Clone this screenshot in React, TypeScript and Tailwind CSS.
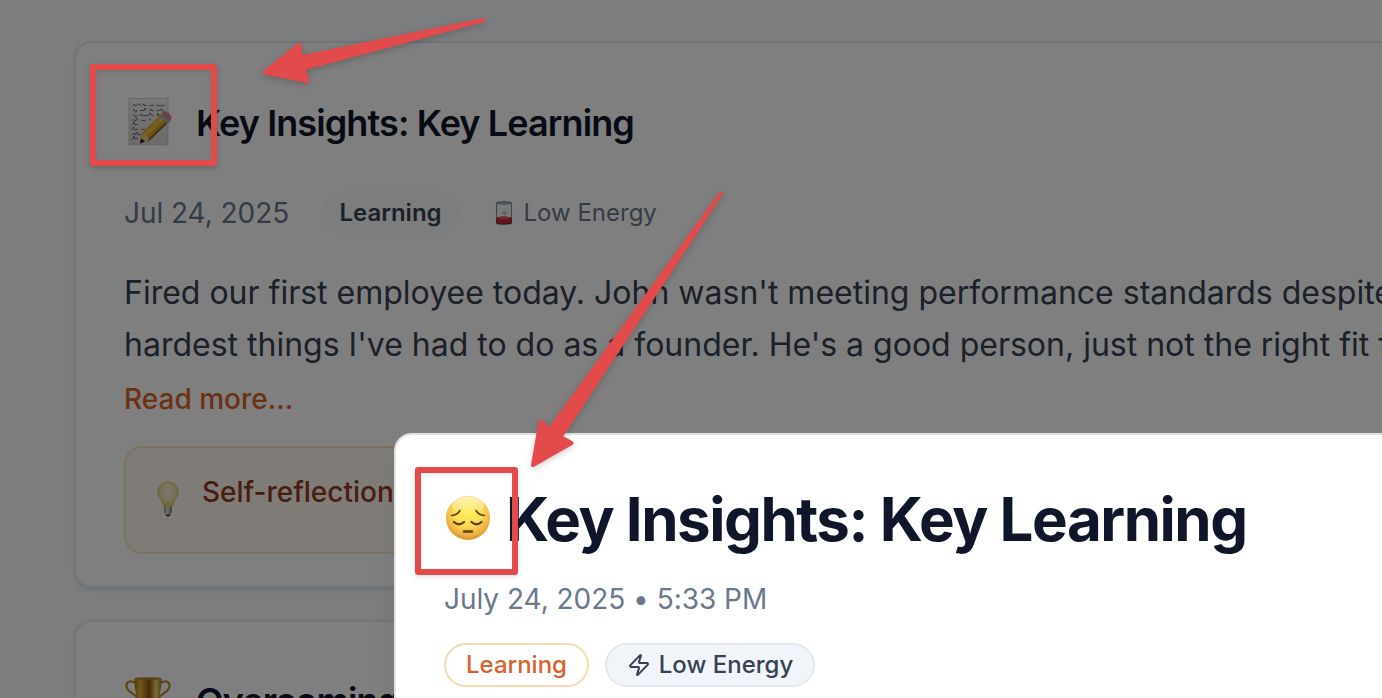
import React from 'react';
import { Zap } from 'lucide-react';

function MemoIcon() {
  return (
    <svg className="h-12 w-12 shrink-0" viewBox="0 0 48 48">
      <defs>
        <linearGradient id="pencil" x1="0" y1="0" x2="1" y2="1">
          <stop offset="0" stopColor="#f0c53c" />
          <stop offset="0.55" stopColor="#dda62d" />
          <stop offset="1" stopColor="#a8741c" />
        </linearGradient>
        <linearGradient id="paper" x1="0" y1="0" x2="0" y2="1">
          <stop offset="0" stopColor="#f0f0f0" />
          <stop offset="1" stopColor="#d6d6d6" />
        </linearGradient>
      </defs>
      <rect x="4" y="0.500" width="39" height="46.500" fill="url(#paper)" stroke="#c2c2c2" strokeWidth=".8" />
      <g fill="none" stroke="#333" strokeWidth=".65" strokeLinejoin="round">
        <path d="M8 8q1-3 2-1t2 0 2-1 2 1M17 8l2-2 1 2 2-1M24 8l2-1 1 1 2-1M31 8l2-1 2 1 2-1 1 1 2-1" />
        <path d="M8 13q1-3 2 0t2-1M15 13l1-1 1 1 1-1 1 1 1-3 1 2M24 13l2-2 1 2 2-1M31 13l2-1 1 1 2-2 1 2 2-1" />
        <path d="M8 18q1-3 2 0t2-1M14 18l2-2 1 2 2-1 1 1 2-1 1 1 2-3 2 3 2-1M32 18l1-3 1 3 2-1" />
        <path d="M7 22.500q1-2 2 0t2-1 2 1M16 23l2-1 1 1 2-1M24 22l2-1" />
        <path d="M7 27l2-3 1 3 2-1 1 1M7 32l1-3 2 3 2-1 1 1M16 32l2-1 2 1" />
        <path d="M7 37l2-2 1 2 2-3 1 3 3-1M7 42l2-4 1 3 2-1 1 1" />
      </g>
      <path d="m15 42 2-7L36.500 15.500l8 7.500L23.500 43.500z" fill="url(#pencil)" />
      <path d="M18.500 36 37 17.500l3 3-18 18z" fill="#f3d24f" opacity=".55" />
      <path d="m22.500 42 20.500-20 1.500 1.500-21 20z" fill="#95631a" />
      <path d="m15 45.500 2-9.500c3 0 6.500 3 7 6.500z" fill="#e0c59a" />
      <path d="m15 45.500 1-5 4 3z" fill="#161616" />
      <path d="m34 18 4-4 8 8-4 4z" fill="#a4b0ba" />
      <path d="m36.500 15.500 2-2c3-1 9 4 8 7l-1.500 3z" fill="#db8186" />
    </svg>
  );
}

function BatteryIcon() {
  return (
    <svg className="h-6 w-[18px] shrink-0" viewBox="0 0 18 24">
      <rect x="1.500" y="1.500" width="15" height="21.500" rx="2" fill="#f1f1f1" stroke="#888" strokeWidth="1.100" />
      <path d="M1 17c3-2 13-2 16 0v4.500c-2 2-14 2-16 0z" fill="#b92b34" />
      <ellipse cx="9" cy="17" rx="6" ry="1.500" fill="#d95258" />
      <path d="M1 21c4 2 12 2 16 0v1c-3 2-13 2-16 0z" fill="#7b2730" />
      <path d="m10.500 8-4 5h3l-1 3.500 4-5.500h-3z" fill="#bbb" />
      <ellipse cx="9" cy="1.800" rx="7.500" ry="1.200" fill="#a6b6c2" stroke="#607486" strokeWidth=".7" />
    </svg>
  );
}

function BulbIcon() {
  return (
    <svg className="h-9 w-[22px] shrink-0" viewBox="0 0 22 36">
      <defs>
        <radialGradient id="bulb" cx=".5" cy=".38" r=".6">
          <stop offset="0" stopColor="#f7f4e4" />
          <stop offset="0.6" stopColor="#eee2ae" />
          <stop offset="1" stopColor="#dfc665" />
        </radialGradient>
        <linearGradient id="bulbBase">
          <stop offset="0" stopColor="#888" />
          <stop offset=".4" stopColor="#e4e4e4" />
          <stop offset="1" stopColor="#777" />
        </linearGradient>
      </defs>
      <path d="M11 1C5 1 1 5 1 11c0 6 5 9 6 15h8c1-6 6-9 6-15C21 5 17 1 11 1z" fill="url(#bulb)" stroke="#d9c46c" />
      <path d="M7 26h8v5l-2 3H9l-2-3z" fill="url(#bulbBase)" />
      <path d="M8.500 33.500h5l-1.500 2h-2z" fill="#333" />
    </svg>
  );
}

function TrophyIcon() {
  return (
    <svg className="h-12 w-12 shrink-0" viewBox="0 0 48 48">
      <defs>
        <linearGradient id="cup">
          <stop offset="0" stopColor="#a96d13" />
          <stop offset=".2" stopColor="#e0b442" />
          <stop offset=".4" stopColor="#b87a18" />
          <stop offset=".55" stopColor="#8c540a" />
          <stop offset=".8" stopColor="#f0da78" />
          <stop offset="1" stopColor="#a56d1d" />
        </linearGradient>
      </defs>
      <path d="M12 6C5 2 1 6 3 11c2 6 9 5 11 11M36 6c7-4 11 0 9 5-2 6-9 5-11 11" fill="none" stroke="#c48c2b" strokeWidth="2.300" />
      <path d="M10.500 1.500h27c0 16-4 24-10.500 27.500v8h-6v-8C14.500 25.500 10.500 17.500 10.500 1.500z" fill="url(#cup)" />
      <ellipse cx="24" cy="1.500" rx="13.500" ry="1.300" fill="#b5822f" />
      <path d="M14 37h20v10H14z" fill="#6b3e18" />
    </svg>
  );
}

function PensiveIcon() {
  return (
    <svg className="h-[46px] w-[46px] shrink-0" viewBox="0 0 46 46">
      <defs>
        <radialGradient id="face" cx=".5" cy=".36" r=".65">
          <stop offset="0" stopColor="#fdf05a" />
          <stop offset=".5" stopColor="#f9dc55" />
          <stop offset=".8" stopColor="#eeb242" />
          <stop offset="1" stopColor="#d98c31" />
        </radialGradient>
        <linearGradient id="shine" x1="0" y1="0" x2="0" y2="1">
          <stop offset="0" stopColor="#fff" stopOpacity=".6" />
          <stop offset="1" stopColor="#fff" stopOpacity="0" />
        </linearGradient>
      </defs>
      <circle cx="23" cy="23" r="22" fill="url(#face)" />
      <ellipse cx="23" cy="10.500" rx="16" ry="9" fill="url(#shine)" />
      <g fill="none" stroke="#64400f" strokeLinecap="round">
        <path d="M6.500 20.500q6-.500 8.500-5M39.500 20.500q-6-.500-8.500-5" strokeWidth="1.600" />
        <path d="M9 27q5 4.500 10 0M26.500 27q5 4.500 10 0" strokeWidth="2.300" />
        <path d="M19 36.500h8" strokeWidth="2.500" />
      </g>
    </svg>
  );
}

function EntryCard() {
  return (
    <article className="h-[547px] shrink-0 rounded-[18px] border-2 border-[#e2e8f0] bg-white px-12 pt-10 shadow-[0_2px_4px_rgba(0,0,0,0.1)]">
      <div className="flex h-20 items-center">
        <div className="-mt-[3px] ml-px"><MemoIcon /></div>
        <h2 className="ml-[23px] text-[36px] font-semibold tracking-[-0.9px] text-[#10162a]">Key Insights: Key Learning</h2>
      </div>
      <div className="mt-7 flex h-11 items-center">
        <span className="w-[197px] text-[28px] tracking-[-0.05px] text-[#6b778c]">Jul 24, 2025</span>
        <span className="flex h-11 w-[139px] items-center justify-center rounded-full bg-slate-50 text-[24px] font-semibold text-[#364153]">Learning</span>
        <span className="ml-[35px] flex items-center gap-[10.5px] text-[24px] text-[#6b778c]">
          <BatteryIcon />
          Low Energy
        </span>
      </div>
      <p className="mt-8 text-[32px] leading-[52px] text-[#364153]">
        Fired our first employee today. John wasn't meeting performance standards despite
        <br />
        hardest things I've had to do as a founder. He's a good person, just not the right fit for
      </p>
      <button className="mt-2 block h-10 text-[28px] leading-10 font-medium text-[#d9622b]">Read more...</button>
      <div className="mt-[27px] flex h-[108px] rounded-[18px] border-2 border-[#f8e4c8] bg-[#fff7ec] pt-6 pl-[31px]">
        <div className="pt-[9px]"><BulbIcon /></div>
        <p className="ml-[23px] text-[28px] leading-10 font-medium text-[#913b1f]">Self-reflection</p>
      </div>
    </article>
  );
}

function Arrows() {
  return (
    <svg className="absolute inset-0 h-[698px] w-[1382px] drop-shadow-[0_2px_3px_rgba(0,0,0,0.2)]" viewBox="0 0 1382 698">
      <g fill="#e34a4b" stroke="#e34a4b" strokeWidth="4" strokeLinejoin="round">
        <path d="m483.500 20-183 37.500-1-13-35 28 43 8.500-4.500-12.500z" />
        <path d="m721 193.500-171 236-9.500-8-7.500 43.500 38.500-22-11-6z" />
      </g>
    </svg>
  );
}

export default function App() {
  return (
    <main className="relative h-[698px] w-[1382px] overflow-hidden bg-[#f8fafc] font-[Inter,sans-serif] whitespace-nowrap [font-optical-sizing:none]">
      <div className="flex h-[698px] w-[2000px] flex-col gap-8 overflow-hidden pt-[41px] pl-[74px]">
        <EntryCard />
        <article className="h-[547px] shrink-0 rounded-[18px] border-2 border-[#e2e8f0] bg-white px-12 pt-[39px] shadow-[0_2px_4px_rgba(0,0,0,0.1)]">
          <div className="flex h-20 items-center">
            <TrophyIcon />
            <h2 className="ml-6 text-[36px] font-semibold tracking-[-0.9px] text-[#10162a]">Overcoming</h2>
          </div>
        </article>
      </div>
      <div className="absolute inset-0 bg-black/50" />
      <section className="absolute top-[433px] left-[394px] h-[500px] w-[1400px] rounded-[18px] border-2 border-[#e2e2e2] bg-white px-12 pt-[46px] shadow-[0_20px_30px_-6px_rgba(0,0,0,0.1)]">
        <div className="flex h-[76px] items-center">
          <div className="-mt-[3px] ml-px"><PensiveIcon /></div>
          <h1 className="ml-[15px] text-[60px] leading-[72px] font-bold tracking-[-1.48px] text-[#10162a]">Key Insights: Key Learning</h1>
        </div>
        <p className="mt-[22px] text-[28px] leading-10 tracking-[-0.03px] text-[#6b778c]">July 24, 2025 • 5:33 PM</p>
        <div className="mt-6 flex gap-4">
          <span className="flex h-11 w-[145px] items-center justify-center rounded-full border-2 border-[#f8d7ae] text-[24px] font-medium text-[#d9622b]">Learning</span>
          <span className="flex h-11 w-[210px] items-center justify-center gap-2 rounded-full border-2 border-slate-200 bg-slate-100 text-[24px] font-medium text-[#364153]">
            <Zap size={24} strokeWidth={2} />
            Low Energy
          </span>
        </div>
      </section>
      <Arrows />
      <div className="absolute top-[63.5px] left-[90px] h-[102px] w-[127px] rounded-[3px] border-[6px] border-[#e34a4b] shadow-[0_2px_5px_rgba(0,0,0,0.2),inset_0_2px_5px_rgba(0,0,0,0.12)]" />
      <div className="absolute top-[467px] left-[415px] h-[108px] w-[103px] rounded-[3px] border-[6px] border-[#e34a4b] shadow-[0_2px_5px_rgba(0,0,0,0.12),inset_0_2px_5px_rgba(0,0,0,0.08)]" />
    </main>
  );
}
